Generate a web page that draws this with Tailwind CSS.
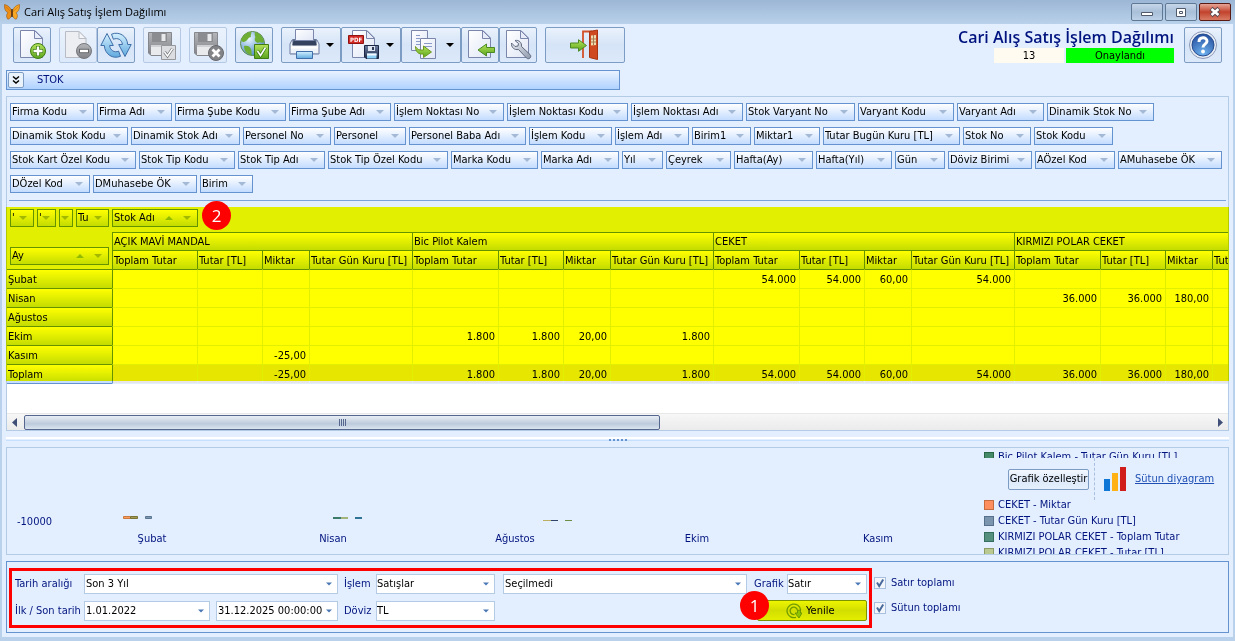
<!DOCTYPE html>
<html lang="tr">

<head>
    <meta charset="UTF-8">
    <meta name="viewport" content="width=device-width, initial-scale=1.0">
    <title>Cari Alış Satış İşlem Dağılımı</title>
    <script src="https://cdn.jsdelivr.net/npm/@tailwindcss/browser@4"></script>
</head>

<body class="min-h-screen flex flex-col bg-[#b9d1ea] text-black text-[11px] leading-4 font-['DejaVu_Sans_Condensed','Roboto',sans-serif]">

    <!-- shared shapes -->
    <svg class="absolute w-0 h-0" aria-hidden="true">
        <defs>
            <linearGradient id="g-paper" x1="0" y1="0" x2="1" y2="1">
                <stop offset="0" stop-color="#ffffff" />
                <stop offset="1" stop-color="#dfe6f5" />
            </linearGradient>
            <linearGradient id="g-green" x1="0" y1="0" x2="0" y2="1">
                <stop offset="0" stop-color="#b5e35c" />
                <stop offset="1" stop-color="#5aa51c" />
            </linearGradient>
            <linearGradient id="g-grey" x1="0" y1="0" x2="0" y2="1">
                <stop offset="0" stop-color="#b4b6ba" />
                <stop offset="1" stop-color="#7f8186" />
            </linearGradient>
            <linearGradient id="g-blue" x1="0" y1="0" x2="0" y2="1">
                <stop offset="0" stop-color="#d4f0ff" />
                <stop offset="1" stop-color="#5fa9de" />
            </linearGradient>
            <linearGradient id="g-dark" x1="0" y1="0" x2="0" y2="1">
                <stop offset="0" stop-color="#6d7da0" />
                <stop offset="1" stop-color="#1f2c4c" />
            </linearGradient>
            <linearGradient id="g-steel" x1="0" y1="0" x2="1" y2="1">
                <stop offset="0" stop-color="#eef1f6" />
                <stop offset="1" stop-color="#8e98ab" />
            </linearGradient>
            <radialGradient id="g-help" cx=".5" cy=".9" r=".9">
                <stop offset="0" stop-color="#6fb3f0" />
                <stop offset="1" stop-color="#254f9f" />
            </radialGradient>
            <radialGradient id="g-globe" cx=".35" cy=".3" r=".8">
                <stop offset="0" stop-color="#eaf7ff" />
                <stop offset="1" stop-color="#3f80c4" />
            </radialGradient>
        </defs>
        <symbol id="i-down" viewBox="0 0 8 4">
            <path d="M0 0h8L4 4z" fill="currentColor" />
        </symbol>
        <symbol id="i-up" viewBox="0 0 8 4">
            <path d="M0 4h8L4 0z" fill="currentColor" />
        </symbol>
        <symbol id="i-doc" viewBox="0 0 32 32">
            <path d="M4.500 1.500H19l7.500 7.500v19.500h-22z" fill="url(#g-paper)" stroke="#7b86ad" />
            <path d="M18.500 1.500v8h8z" fill="#e8ecf8" stroke="#7b86ad" stroke-linejoin="round" />
        </symbol>
        <symbol id="i-arrow" viewBox="0 0 17 13">
            <path d="M.5 4h8V.7l8 5.800-8 5.800V9h-8z" fill="url(#g-green)" stroke="#4b8a22" stroke-linejoin="round" />
        </symbol>
        <symbol id="i-floppy" viewBox="0 0 24 24">
            <path d="M.5.5h23v23H3l-2.500-2.500z" fill="url(#g-grey)" stroke="#85878c" />
            <path d="M4 1h15v9H4z" fill="#8a8c90" />
            <path d="M13.500 2h4v7h-4z" fill="#e8e9eb" />
            <path d="M3 13h18v10H3z" fill="#e9eaec" />
            <path d="M3 13h18v2H3z" fill="#cfd1d4" />
        </symbol>
    </svg>

    <header class="h-6 shrink-0 flex items-center pl-1 pr-1 bg-linear-to-b from-[#9cb6d5] to-[#b9d1ea] font-['Open_Sans',sans-serif]">
        <svg class="w-4 h-4" viewBox="0 0 16 16">
            <path d="M7.800 8C7 4 4 1 .3.600.3 4 1 7.500 4 8.800 2.200 10 2 13 3.800 15.200 6.500 15 7.800 12 7.800 8z" fill="#ee8f17" stroke="#8a4a0c" stroke-width=".5" />
            <path d="M8.200 8C9 4 12 1 15.700.600c0 3.400-.7 6.900-3.700 8.200 1.800 1.200 2 4.200.2 6.400C9.500 15 8.200 12 8.200 8z" fill="#f9a825" stroke="#8a4a0c" stroke-width=".5" />
            <path d="M1.500 2.500L7.500 8M14.500 2.500L8.500 8" stroke="#c26a10" stroke-width=".6" />
            <path d="M8 5v8" stroke="#4a2606" stroke-width="1.400" />
        </svg>
        <span class="ml-1 text-[11px]">Cari Alış Satış İşlem Dağılımı</span>
        <div class="ml-auto flex gap-[2px]">
            <button aria-label="Simge durumuna küçült" class="w-8 h-[18px] flex items-center justify-center rounded-xs border border-[#5f7995] bg-linear-to-b from-[#c6d6e8] via-[#a8bfd8] via-50% to-[#bdd2e8]">
                <svg class="w-3 h-3" viewBox="0 0 12 12"><path d="M.5 6.500h11v3H.5z" fill="#fff" stroke="#4f5b6b" /></svg>
            </button>
            <button aria-label="Ekranı kapla" class="w-8 h-[18px] flex items-center justify-center rounded-xs border border-[#5f7995] bg-linear-to-b from-[#c6d6e8] via-[#a8bfd8] via-50% to-[#bdd2e8]">
                <svg class="w-3 h-3" viewBox="0 0 12 12"><path d="M1.500 2.500h9v8h-9z" fill="#fff" stroke="#4f5b6b" /><path d="M4.500 5.500h3v2h-3z" fill="none" stroke="#4f5b6b" /></svg>
            </button>
            <button aria-label="Kapat" class="w-8 h-[18px] flex items-center justify-center rounded-xs border border-[#5a1a14] bg-linear-to-b from-[#e5a497] via-[#c2412c] via-50% to-[#d87a63]">
                <svg class="w-3 h-3" viewBox="0 0 12 12"><path d="M2 2.500l8 7M10 2.500l-8 7" stroke="#5b4a50" stroke-width="4.400" /><path d="M2.500 3l7 6M9.500 3l-7 6" stroke="#fff" stroke-width="2.600" /></svg>
            </button>
        </div>
    </header>

    <main class="flex-1 mx-[2px] mb-1 px-1 pt-[3px] bg-[#e3efff]">

        <!-- toolbar -->
        <div class="flex items-start justify-between px-[7px]">
            <div class="flex h-9">
                <button aria-label="Yeni" class="w-[38px] mr-2 flex items-center justify-center rounded-xs border border-[#7d9cc4] bg-linear-to-b from-[#eaf2fc] via-[#d5e4f7] via-50% to-[#dce9fa]">
                    <svg class="w-8 h-8" viewBox="0 0 32 32">
                        <use href="#i-doc" />
                        <circle cx="22" cy="22" r="7.500" fill="url(#g-green)" stroke="#3f7d14" />
                        <path d="M22 17v10M17 22h10" stroke="#3f7d14" stroke-width="4" />
                        <path d="M22 17.500v9M17.500 22h9" stroke="#fff" stroke-width="2.400" />
                    </svg>
                </button>
                <button aria-label="Sil" disabled class="w-[38px] flex items-center justify-center rounded-xs border border-[#b5c9e4] bg-linear-to-b from-[#eaf2fc] to-[#dce9fa]">
                    <svg class="w-8 h-8" viewBox="0 0 32 32">
                        <path d="M3.500 2.500H17l7 7v19H3.500z" fill="#eceef2" stroke="#b9bcc4" />
                        <path d="M17 2.500v7h7z" fill="#f4f5f8" stroke="#b9bcc4" />
                        <circle cx="22" cy="22" r="7.500" fill="url(#g-grey)" stroke="#77797e" />
                        <path d="M17 22h10" stroke="#66686c" stroke-width="4.400" />
                        <path d="M18 22h8" stroke="#fff" stroke-width="2.400" />
                    </svg>
                </button>
                <button aria-label="Yenile" class="w-[38px] mr-2 flex items-center justify-center rounded-xs border border-[#7d9cc4] bg-linear-to-b from-[#eaf2fc] via-[#d5e4f7] via-50% to-[#dce9fa]">
                    <svg class="w-8 h-8" viewBox="0 0 32 32">
                        <path d="M20.500 27.300C13 30.500 4.800 25.500 4.300 16.500H.8L7 4.500l6.300 12H9.600c.4 4.800 5 7.600 9 5.600z" fill="url(#g-blue)" stroke="#3f6ea8" stroke-linejoin="round" />
                        <path d="M11.500 5.200C19 2 27.200 7 27.700 15.500h3.500L25 27.500l-6.300-12h3.700c-.4-4.800-5-7.200-9-5.200z" fill="url(#g-blue)" stroke="#3f6ea8" stroke-linejoin="round" />
                    </svg>
                </button>
                <button aria-label="Kaydet" disabled class="w-[38px] mr-2 flex items-center justify-center rounded-xs border border-[#b5c9e4] bg-linear-to-b from-[#eaf2fc] to-[#dce9fa]">
                    <svg class="w-8 h-8" viewBox="0 0 32 32">
                        <use href="#i-floppy" x="2" y="3" width="24" height="24" />
                        <path d="M15.500 16.500h14v14h-14z" fill="#dcdde0" stroke="#96989d" />
                        <path d="M18.500 23l3 4 5-7.500" fill="none" stroke="#77797e" stroke-width="3" />
                        <path d="M18.500 23l3 4 5-7.500" fill="none" stroke="#fff" stroke-width="1.400" />
                    </svg>
                </button>
                <button aria-label="Kaydı iptal et" disabled class="w-[38px] mr-2 flex items-center justify-center rounded-xs border border-[#b5c9e4] bg-linear-to-b from-[#eaf2fc] to-[#dce9fa]">
                    <svg class="w-8 h-8" viewBox="0 0 32 32">
                        <use href="#i-floppy" x="2" y="3" width="24" height="24" />
                        <circle cx="24" cy="24" r="7.500" fill="#828488" stroke="#66686c" />
                        <path d="M20.500 20.500l7 7M27.500 20.500l-7 7" stroke="#fff" stroke-width="2.800" />
                    </svg>
                </button>
                <button aria-label="Onayla" class="w-[38px] mr-2 flex items-center justify-center rounded-xs border border-[#7d9cc4] bg-linear-to-b from-[#eaf2fc] via-[#d5e4f7] via-50% to-[#dce9fa]">
                    <svg class="w-8 h-8" viewBox="0 0 32 32">
                        <circle cx="14.500" cy="14.500" r="12" fill="url(#g-globe)" stroke="#5b8a4a" />
                        <path d="M3 11C5 6 9 3 13 3c1 2-1 3 0 5-3 0-3 3-5 4s-3 2-5-1zM17 3c5 1 8 5 9 10-2 2-4-1-6 1-2-1-4-2-3-5 1-1-1-3 0-6zM6 17c3-1 6 0 7 3 1 2 0 4 1 6-5-.5-8-4-8-9z" fill="#6fae35" />
                        <path d="M16.500 15.500h14v14h-14z" fill="url(#g-green)" stroke="#3f7d14" />
                        <path d="M19.500 22l3 4.500 5-8" fill="none" stroke="#3f7d14" stroke-width="3.200" />
                        <path d="M19.500 22l3 4.500 5-8" fill="none" stroke="#fff" stroke-width="1.600" />
                    </svg>
                </button>
                <button aria-label="Yazdır" class="w-[60px] pl-[6px] flex items-center rounded-xs border border-[#7d9cc4] bg-linear-to-b from-[#eaf2fc] via-[#d5e4f7] via-50% to-[#dce9fa]">
                    <svg class="w-8 h-8" viewBox="0 0 32 32">
                        <path d="M4 11h25l2 4v10H2V15z" fill="#eef2f9" stroke="#6c7ba0" stroke-linejoin="round" />
                        <path d="M4.500 10h24v6.500h-24z" fill="url(#g-dark)" />
                        <path d="M7.500.5h18v11h-18z" fill="url(#g-paper)" stroke="#7b86ad" />
                        <path d="M6 12h21l1.500 4H4.500z" fill="#33415f" />
                        <path d="M3 18.500h27" stroke="#fff" stroke-width="2" />
                        <path d="M3 24.500h27" stroke="#98a5c2" />
                        <path d="M8.500 22.500h16v7h-16z" fill="url(#g-blue)" stroke="#3f6ea8" />
                    </svg>
                    <svg class="w-2 h-1 ml-[6px]"><use href="#i-down" /></svg>
                </button>
                <button aria-label="PDF olarak kaydet" class="w-[60px] pl-[6px] flex items-center rounded-xs border border-[#7d9cc4] bg-linear-to-b from-[#eaf2fc] via-[#d5e4f7] via-50% to-[#dce9fa]">
                    <svg class="w-8 h-8" viewBox="0 0 32 32">
                        <use href="#i-doc" />
                        <path d="M.5 6.500h15v8H.5z" fill="#d32a26" stroke="#8e1311" />
                        <text x="2" y="13" fill="#fff" font-size="6" font-weight="bold">PDF</text>
                        <path d="M16.500 16.500h14v13H18l-1.500-1.500z" fill="url(#g-dark)" stroke="#1b2644" />
                        <path d="M20 17h7v5h-7z" fill="#dfe6f2" />
                        <path d="M24 18h2v3h-2z" fill="#2b3858" />
                        <path d="M19 24.500h9.500v5H19z" fill="#8fd0f7" />
                        <path d="M19 24.500h9.500v2H19z" fill="#f4f9ff" />
                    </svg>
                    <svg class="w-2 h-1 ml-[6px]"><use href="#i-down" /></svg>
                </button>
                <button aria-label="Kopyala" class="w-[60px] pl-[6px] flex items-center rounded-xs border border-[#7d9cc4] bg-linear-to-b from-[#eaf2fc] via-[#d5e4f7] via-50% to-[#dce9fa]">
                    <svg class="w-8 h-8" viewBox="0 0 32 32">
                        <path d="M3.500 1.500h16v20h-16z" fill="url(#g-paper)" stroke="#7b86ad" />
                        <path d="M8 6.500h4M8 9.500h4M8 12.500h4M8 15.500h4" stroke="#8b9bc8" />
                        <path d="M12.500 9.500h15v20h-15z" fill="url(#g-paper)" stroke="#7b86ad" />
                        <path d="M16 14.500h8M16 17.500h8" stroke="#8b9bc8" />
                        <path d="M7.500 17.500c1.500 3 4 4 8 3.500v-4l8 6-8 5.500v-3.500c-5 .5-8-2-8-7.500z" fill="url(#g-green)" stroke="#6f9a1c" stroke-linejoin="round" />
                    </svg>
                    <svg class="w-2 h-1 ml-[6px]"><use href="#i-down" /></svg>
                </button>
                <button aria-label="İçe aktar" class="w-[38px] flex items-center justify-center rounded-xs border border-[#7d9cc4] bg-linear-to-b from-[#eaf2fc] via-[#d5e4f7] via-50% to-[#dce9fa]">
                    <svg class="w-8 h-8" viewBox="0 0 32 32">
                        <use href="#i-doc" />
                        <path d="M30.500 18.500h-8v-3.500l-8.500 6 8.500 6v-3.500h8z" fill="url(#g-green)" stroke="#4b8a22" stroke-linejoin="round" />
                    </svg>
                </button>
                <button aria-label="Ayarlar" class="w-[38px] mr-2 flex items-center justify-center rounded-xs border border-[#7d9cc4] bg-linear-to-b from-[#eaf2fc] via-[#d5e4f7] via-50% to-[#dce9fa]">
                    <svg class="w-8 h-8" viewBox="0 0 32 32">
                        <use href="#i-doc" />
                        <path d="M13 11.500c4-.8 7 2 6.500 6l8.500 8c1 1 1 2.500 0 3.500s-2.500 1-3.500 0l-8-8.500c-4 .8-7.500-2-7-6.500l3.500 3.500 3-.5.5-2.500z" fill="url(#g-steel)" stroke="#5f6a80" stroke-linejoin="round" />
                    </svg>
                </button>
                <button aria-label="Çıkış" class="w-20 flex items-center justify-center rounded-xs border border-[#7d9cc4] bg-linear-to-b from-[#eaf2fc] via-[#d5e4f7] via-50% to-[#dce9fa]">
                    <svg class="w-8 h-8" viewBox="0 0 32 32">
                        <path d="M14 29V2.500h9" fill="none" stroke="#d2502a" stroke-width="1.800" />
                        <path d="M20.500 2.500l8-1.500v29.500l-8-2z" fill="#cf4a20" stroke="#a83411" />
                        <path d="M22 6.500l5-.5v10l-5 .5z" fill="#f1dcae" />
                        <path d="M24.500 6v10M22 10h5M22 13h5" stroke="#a87a52" />
                        <use href="#i-arrow" x="1" y="10" width="17" height="13" />
                    </svg>
                </button>
            </div>
            <div class="flex gap-[10px]">
                <div>
                    <h1 class="h-[21px] text-right text-base leading-[21px] font-semibold text-[#00137f] font-['Open_Sans',sans-serif]">Cari Alış Satış İşlem Dağılımı</h1>
                    <div class="flex justify-end gap-[2px] text-center leading-[15px]">
                        <span class="w-[70px] bg-[#fffbf0]">13</span>
                        <span class="w-[108px] bg-[#00ff00]">Onaylandı</span>
                    </div>
                </div>
                <button aria-label="Yardım" class="w-[38px] h-9 flex items-center justify-center rounded-xs border border-[#7d9cc4] bg-linear-to-b from-[#eaf2fc] via-[#d5e4f7] via-50% to-[#dce9fa]">
                    <svg class="w-8 h-8" viewBox="0 0 32 32">
                        <circle cx="16" cy="16" r="13.500" fill="#e9edf5" stroke="#8b98b5" />
                        <circle cx="16" cy="16" r="11" fill="url(#g-help)" stroke="#274c8f" />
                        <path d="M12 13c0-5.500 8-5.500 8-.8 0 3-4 3-4 6.200" fill="none" stroke="#fff" stroke-width="3" />
                        <circle cx="16" cy="22.500" r="1.900" fill="#fff" />
                    </svg>
                </button>
            </div>
        </div>

        <div class="mt-[7px] w-[614px] h-5 flex items-center pl-px border border-[#6593cf] bg-linear-to-b from-[#e9f2ff] to-[#afd2ff] text-[#00137f]">
            <button aria-label="Genişlet" class="w-4 h-4 flex items-center justify-center rounded-xs border border-[#7d9cc4] bg-[#eaf2fc]">
                <svg class="w-[10px] h-[10px]" viewBox="0 0 10 10"><path d="M2 1.500l3 2.500 3-2.500M2 5.500l3 2.500 3-2.500" fill="none" stroke="#000" stroke-width="1.500" /></svg>
            </button>
            <span class="ml-[13px]">STOK</span>
        </div>

        <!-- pivot grid -->
        <section class="mt-[6px] border border-[#b4cbe6]">
            <div id="fields" class="flex flex-wrap gap-x-[3px] gap-y-[6px] pt-[6px] px-[3px] pb-[7px]"></div>
            <hr class="mx-[2px] mb-[6px] border-[#7ba3d9]">

            <div class="relative">
                <div id="columnFields" class="flex gap-[3px] pt-[2px] pl-[3px] pb-[5px]"></div>
                <div class="overflow-hidden bg-white pb-[29px]">
                    <table class="w-[1308px] table-fixed border-separate border-spacing-0 leading-[17px]">
                        <colgroup id="cols"></colgroup>
                        <thead id="head"></thead>
                        <tbody id="body"></tbody>
                    </table>
                </div>
                <!-- highlighter -->
                <div class="absolute top-0 -left-px -right-px h-[174px] bg-[#ffff00] mix-blend-multiply pointer-events-none"></div>
                <span class="absolute -top-[6px] left-[195px] w-[29px] h-[29px] rounded-full bg-[#ff0000] text-white text-[17px] leading-[29px] text-center font-['Open_Sans',sans-serif]">2</span>
            </div>

            <div class="h-[17px] flex items-center px-[5px] bg-linear-to-b from-[#f7f7f7] to-[#ebebeb] border-t border-[#e8e8e8] text-[#3f4f78]">
                <svg class="w-[5px] h-[9px]" viewBox="0 0 5 9"><path d="M5 0v9L0 4.500z" fill="currentColor" /></svg>
                <div class="flex-1 ml-[7px] mr-[7px]">
                    <div class="w-[636px] h-[15px] flex items-center justify-center gap-px rounded-xs border border-[#56678f] bg-linear-to-b from-[#e9eef5] via-[#bccadb] via-60% to-[#dbe5f0]">
                        <i class="w-px h-[7px] bg-[#56678f]"></i>
                        <i class="w-px h-[7px] bg-[#56678f]"></i>
                        <i class="w-px h-[7px] bg-[#56678f]"></i>
                        <i class="w-px h-[7px] bg-[#56678f]"></i>
                    </div>
                </div>
                <svg class="w-[5px] h-[9px]" viewBox="0 0 5 9"><path d="M0 0v9l5-4.500z" fill="currentColor" /></svg>
            </div>
        </section>

        <!-- splitter -->
        <div class="h-4 pt-[6px]">
            <div class="h-1 flex items-center justify-center gap-[2px] border-t-2 border-t-white border-b border-b-[#c5dfff]">
                <i class="w-[2px] h-[2px] bg-[#6593cf]"></i>
                <i class="w-[2px] h-[2px] bg-[#6593cf]"></i>
                <i class="w-[2px] h-[2px] bg-[#6593cf]"></i>
                <i class="w-[2px] h-[2px] bg-[#6593cf]"></i>
                <i class="w-[2px] h-[2px] bg-[#6593cf]"></i>
            </div>
        </div>

        <!-- chart -->
        <section class="h-[108px] flex border border-[#b4cbe6] text-[#00137f]">
            <svg class="flex-1 h-full" fill="currentColor">
                <text x="10" y="77">-10000</text>
                <g stroke-width="1">
                    <path d="M116.500 68.500h7v2h-7z" fill="#ff9d5c" stroke="#c9783f" />
                    <path d="M123.500 68.500h7v2h-7z" fill="#a39b52" stroke="#7a7336" />
                    <path d="M138.500 68.500h6v2h-6z" fill="#7e99b2" stroke="#5b7591" />
                </g>
                <path d="M326 69h8v2h-8z" fill="#3c7b6c" />
                <path d="M334 69h7v2h-7z" fill="#a3b57c" />
                <path d="M348 69h7v2h-7z" fill="#2f7396" />
                <path d="M536 72h8v1h-8z" fill="#bcae60" />
                <path d="M544 72h7v1h-7z" fill="#31456b" />
                <path d="M558 72h7v1h-7z" fill="#6d8d47" />
                <g text-anchor="middle">
                    <text x="145" y="94">Şubat</text>
                    <text x="326" y="94">Nisan</text>
                    <text x="508" y="94">Ağustos</text>
                    <text x="690" y="94">Ekim</text>
                    <text x="871" y="94">Kasım</text>
                </g>
            </svg>
            <div class="w-[244px] flex flex-col">
                <ul class="h-[10px] shrink-0 overflow-hidden">
                    <li class="mt-px h-4 flex items-center gap-1"><i class="w-[10px] h-[10px] border border-[#2b6548] bg-[#458a68]"></i>Bic Pilot Kalem - Tutar Gün Kuru [TL]</li>
                </ul>
                <div class="h-[42px] shrink-0 flex items-center pl-6">
                    <button class="w-[81px] h-[21px] rounded-xs border border-[#7d9cc4] bg-linear-to-b from-[#f4f8fe] via-[#dce9fa] via-50% to-[#e6f0fd] text-black whitespace-nowrap">Grafik özelleştir</button>
                    <div class="h-full ml-[5px] border-l border-dashed border-[#a9bfdf]"></div>
                    <svg class="w-[22px] h-6 ml-[9px]" viewBox="0 0 22 24">
                        <path d="M0 12h6v12H0z" fill="#1177d7" />
                        <path d="M8 6h6v18H8z" fill="#ffb115" />
                        <path d="M16 0h6v24h-6z" fill="#d11c1c" />
                    </svg>
                    <a href="#" class="ml-[9px] text-[#1f4fb4] underline whitespace-nowrap">Sütun diyagram</a>
                </div>
                <ul class="flex-1 overflow-hidden">
                    <li class="-mt-[3px] h-4 flex items-center gap-1"><i class="w-[10px] h-[10px] border border-[#c66a3f] bg-[#ff8e5e]"></i>CEKET - Miktar</li>
                    <li class="h-4 flex items-center gap-1"><i class="w-[10px] h-[10px] border border-[#56708b] bg-[#7b95ae]"></i>CEKET - Tutar Gün Kuru [TL]</li>
                    <li class="h-4 flex items-center gap-1"><i class="w-[10px] h-[10px] border border-[#356e5e] bg-[#55907f]"></i>KIRMIZI POLAR CEKET - Toplam Tutar</li>
                    <li class="h-4 flex items-center gap-1"><i class="w-[10px] h-[10px] border border-[#8c9a63] bg-[#b9c98f]"></i>KIRMIZI POLAR CEKET - Tutar [TL]</li>
                </ul>
            </div>
        </section>

        <!-- filters -->
        <form class="mt-[6px] h-[72px] flex items-start pt-[6px] pl-[2px] border border-[#6593cf] text-[#00137f]">
            <div class="relative h-[60px] flex flex-col gap-[6px] pt-[2px] pl-[3px] pr-[2px] border-3 border-[#ff0000]">
                <div class="h-[21px] flex items-center">
                    <label for="range" class="w-[69px] whitespace-nowrap">Tarih aralığı</label>
                    <div class="relative w-[254px]">
                        <select id="range" class="appearance-none block w-full h-5 px-px bg-white border border-[#b4cbe6] text-black"><option>Son 3 Yıl</option></select>
                        <svg class="absolute right-[6px] top-2 w-[6px] h-[4px] text-[#4a78b5] pointer-events-none"><use href="#i-down" /></svg>
                    </div>
                    <label for="op" class="ml-[6px] w-8">İşlem</label>
                    <div class="relative w-[119px]">
                        <select id="op" class="appearance-none block w-full h-5 bg-white border border-[#b4cbe6] text-black"><option>Satışlar</option></select>
                        <svg class="absolute right-[6px] top-2 w-[6px] h-[4px] text-[#4a78b5] pointer-events-none"><use href="#i-down" /></svg>
                    </div>
                    <div class="relative ml-2 w-[244px]">
                        <select aria-label="Seçim" class="appearance-none block w-full h-5 px-px bg-white border border-[#b4cbe6] text-black"><option>Seçilmedi</option></select>
                        <svg class="absolute right-[6px] top-2 w-[6px] h-[4px] text-[#4a78b5] pointer-events-none"><use href="#i-down" /></svg>
                    </div>
                    <label for="chart" class="ml-[7px] w-[33px]">Grafik</label>
                    <div class="relative w-20">
                        <select id="chart" class="appearance-none block w-full h-5 bg-white border border-[#b4cbe6] text-black"><option>Satır</option></select>
                        <svg class="absolute right-[6px] top-2 w-[6px] h-[4px] text-[#4a78b5] pointer-events-none"><use href="#i-down" /></svg>
                    </div>
                </div>
                <div class="h-[21px] flex items-center">
                    <label for="from" class="w-[69px] whitespace-nowrap">İlk / Son tarih</label>
                    <div class="relative w-[126px]">
                        <input id="from" type="text" value="1.01.2022" class="block w-full h-5 px-px bg-white border border-[#b4cbe6] text-black">
                        <svg class="absolute right-[6px] top-2 w-[6px] h-[4px] text-[#4a78b5] pointer-events-none"><use href="#i-down" /></svg>
                    </div>
                    <div class="relative ml-[6px] w-[122px]">
                        <input aria-label="Son tarih" type="text" value="31.12.2025 00:00:00" class="block w-full h-5 px-px bg-white border border-[#b4cbe6] text-black">
                        <svg class="absolute right-[6px] top-2 w-[6px] h-[4px] text-[#4a78b5] pointer-events-none"><use href="#i-down" /></svg>
                    </div>
                    <label for="cur" class="ml-[6px] w-8">Döviz</label>
                    <div class="relative w-[119px]">
                        <select id="cur" class="appearance-none block w-full h-5 bg-white border border-[#b4cbe6] text-black"><option>TL</option></select>
                        <svg class="absolute right-[6px] top-2 w-[6px] h-[4px] text-[#4a78b5] pointer-events-none"><use href="#i-down" /></svg>
                    </div>
                    <button type="button" class="ml-auto w-[110px] h-[21px] flex items-center gap-1 pl-7 rounded-xs border border-[#7b9400] bg-linear-to-b from-[#eef500] via-[#d2de00] via-50% to-[#e4ee00] text-black">
                        <svg class="w-4 h-4" viewBox="0 0 16 16">
                            <path d="M10 14.300A6.800 6.800 0 1 1 14.600 7" fill="none" stroke="#6f9a00" stroke-width="1.300" />
                            <path d="M8.500 11.500A3.700 3.700 0 1 1 11.500 7.500" fill="none" stroke="#6f9a00" stroke-width="1.300" />
                            <path d="M11.500 7.500v2.500H9l4 5 3-5h-1.500V7z" fill="#8fc400" stroke="#5d8a00" stroke-width=".8" />
                        </svg>
                        Yenile
                    </button>
                </div>
                <span class="absolute top-5 left-[728px] w-[29px] h-[29px] rounded-full bg-[#ff0000] text-white text-[17px] leading-[29px] text-center font-['Open_Sans',sans-serif]">1</span>
            </div>
            <div class="flex flex-col gap-[9px] pt-[7px] pl-[2px]">
                <label class="flex items-center gap-[5px]">
                    <input type="checkbox" checked class="peer appearance-none w-3 h-3 bg-[#f2f6fb] border border-[#a9bfdf]">
                    <svg class="absolute w-3 h-3 hidden peer-checked:block pointer-events-none" viewBox="0 0 12 12"><path d="M3 5.500L5.200 9l4-6.500" fill="none" stroke="#4a6a9c" stroke-width="2" /></svg>
                    Satır toplamı
                </label>
                <label class="flex items-center gap-[5px]">
                    <input type="checkbox" checked class="peer appearance-none w-3 h-3 bg-[#f2f6fb] border border-[#a9bfdf]">
                    <svg class="absolute w-3 h-3 hidden peer-checked:block pointer-events-none" viewBox="0 0 12 12"><path d="M3 5.500L5.200 9l4-6.500" fill="none" stroke="#4a6a9c" stroke-width="2" /></svg>
                    Sütun toplamı
                </label>
            </div>
        </form>
    </main>

    <script>
        // name, width
        const fields = [
            ['Firma Kodu', 84], ['Firma Adı', 75], ['Firma Şube Kodu', 111], ['Firma Şube Adı', 102], ['İşlem Noktası No', 110],
            ['İşlem Noktası Kodu', 121], ['İşlem Noktası Adı', 112], ['Stok Varyant No', 109], ['Varyant Kodu', 96], ['Varyant Adı', 87],
            ['Dinamik Stok No', 107], ['Dinamik Stok Kodu', 118], ['Dinamik Stok Adı', 109], ['Personel No', 88], ['Personel', 72],
            ['Personel Baba Adı', 117], ['İşlem Kodu', 83], ['İşlem Adı', 74], ['Birim1', 59], ['Miktar1', 66],
            ['Tutar Bugün Kuru [TL]', 137], ['Stok No', 68], ['Stok Kodu', 79], ['Stok Kart Özel Kodu', 126], ['Stok Tip Kodu', 96],
            ['Stok Tip Adı', 87], ['Stok Tip Özel Kodu', 120], ['Marka Kodu', 87], ['Marka Adı', 78], ['Yıl', 41], ['Çeyrek', 65],
            ['Hafta(Ay)', 79], ['Hafta(Yıl)', 76], ['Gün', 50], ['Döviz Birimi', 84], ['AÖzel Kod', 80], ['AMuhasebe ÖK', 104],
            ['DÖzel Kod', 80], ['DMuhasebe ÖK', 104], ['Birim', 53]
        ];
        const columnFields = [["'", 24], ["'", 19], ['', 14], ['Tu', 33], ['Stok Adı', 86, true]];

        function chip([name, width, sorted]) {
            return `
                <button class="h-[18px] flex items-center pl-px pr-[6px] border border-[#6593cf] bg-linear-to-b from-white to-[#c4dcff] text-left leading-4 font-normal" style="width:${width}px">
                    <span class="flex-1 whitespace-nowrap">${name}</span>
                    ${sorted ? '<svg class="w-2 h-1 mr-[10px] shrink-0 text-[#92bb8b]"><use href="#i-up" /></svg>' : ''}
                    <svg class="w-2 h-1 shrink-0 text-[#a3b9d6]"><use href="#i-down" /></svg>
                </button>`;
        }
        document.getElementById('fields').innerHTML = fields.map(chip).join('');
        document.getElementById('columnFields').innerHTML = columnFields.map(chip).join('');

        const products = ['AÇIK MAVİ MANDAL', 'Bic Pilot Kalem', 'CEKET', 'KIRMIZI POLAR CEKET'];
        const measures = ['Toplam Tutar', 'Tutar [TL]', 'Miktar', 'Tutar Gün Kuru [TL]'];
        const widths = [105, 85, 65, 47, 103, 86, 65, 47, 103, 86, 65, 47, 103, 86, 65, 47, 103];
        // month: cell index -> value
        const rows = [
            ['Şubat', { 8: '54.000', 9: '54.000', 10: '60,00', 11: '54.000' }],
            ['Nisan', { 12: '36.000', 13: '36.000', 14: '180,00' }],
            ['Ağustos', {}],
            ['Ekim', { 4: '1.800', 5: '1.800', 6: '20,00', 7: '1.800' }],
            ['Kasım', { 2: '-25,00' }],
            ['Toplam', { 2: '-25,00', 4: '1.800', 5: '1.800', 6: '20,00', 7: '1.800', 8: '54.000', 9: '54.000', 10: '60,00', 11: '54.000', 12: '36.000', 13: '36.000', 14: '180,00' }]
        ];

        document.getElementById('cols').innerHTML = widths.map(w => `<col style="width:${w}px">`).join('');
        document.getElementById('head').innerHTML = `
            <tr>
                <th rowspan="2" class="p-0 pl-[3px] pb-1 align-bottom bg-[#e3efff]">${chip(['Ay', 99, true])}</th>
                ${products.map(p => `<th colspan="4" class="h-[18px] p-0 pl-px text-left font-normal whitespace-nowrap border-t border-l border-[#6593cf] bg-linear-to-b from-white to-[#c4dcff]">${p}</th>`).join('')}
            </tr>
            <tr>
                ${products.map(() => measures.map(m => `<th class="h-[19px] p-0 pl-px text-left font-normal whitespace-nowrap border-t border-l border-[#6593cf] bg-linear-to-b from-white to-[#c4dcff]">${m}</th>`).join('')).join('')}
            </tr>`;
        document.getElementById('body').innerHTML = rows.map(([month, values], r) => {
            const total = month == 'Toplam';
            let cells = '';
            for (let c = 0; c < 16; c++) {
                const left = c == 0 ? 'border-l-[#6593cf]' : 'border-l-[#e3efff]';
                const top = r == 0 ? 'border-t-[#6593cf]' : 'border-t-[#e3efff]';
                const bg = total ? 'border-b border-b-[#e3efff] bg-[#e6e6e6]' : 'bg-white';
                cells += `<td class="p-0 pr-[3px] text-right border-t border-l ${left} ${top} ${bg}">${values[c] || ''}</td>`;
            }
            return `<tr class="${total ? 'h-5' : 'h-[19px]'}"><th class="p-0 pl-px text-left font-normal border-t border-[#6593cf] bg-linear-to-b from-white to-[#c4dcff] ${total ? 'border-b' : ''}">${month}</th>${cells}</tr>`;
        }).join('');
    </script>
</body>

</html>
